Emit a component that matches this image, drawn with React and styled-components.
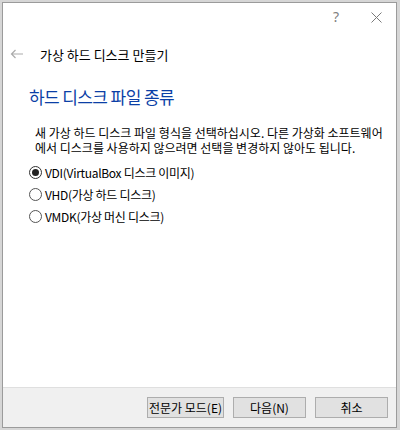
import React, { useState } from 'react';
import styled, { createGlobalStyle } from 'styled-components';

const Global = createGlobalStyle`
  html, body { margin: 0; padding: 0; }
  body {
    font-family: "Noto Sans CJK KR", "Noto Sans", sans-serif;
    font-size: 12px;
    color: #000;
  }
  * { box-sizing: border-box; }
`;

const Desktop = styled.div`
  width: 400px;
  height: 430px;
  background: #d6d6d6;
  padding: 2px 3px 2px 2px;
`;

const Window = styled.div`
  height: 100%;
  display: flex;
  flex-direction: column;
  background: #fff;
  border: 1px solid #9b9b9b;
`;

const TitleBar = styled.div`
  height: 28px;
  display: flex;
  align-items: center;
  justify-content: flex-end;
  padding-right: 14px;
  gap: 32px;
`;

const HelpBtn = styled.span`
  font-family: "Noto Sans", sans-serif;
  font-size: 14px;
  color: #808080;
  line-height: 1;
`;

const Header = styled.div`
  display: flex;
  align-items: center;
  height: 20px;
  margin-top: 13px;
  padding-left: 7px;
  gap: 17px;
`;

const Title = styled.span`
  font-size: 13px;
`;

const Body = styled.div`
  padding-left: 26px;
`;

const Heading = styled.h1`
  margin: 22px 0 0;
  font-size: 17px;
  font-weight: normal;
  line-height: 22px;
  letter-spacing: -0.6px;
  color: #0b3fa6;
`;

const Text = styled.p`
  margin: 17px 0 0 6px;
  line-height: 15px;
`;

const Options = styled.div`
  margin-top: 6px;
  display: flex;
  flex-direction: column;
`;

const Option = styled.label`
  height: 22px;
  display: flex;
  align-items: center;
  gap: 3px;
  letter-spacing: -0.3px;
`;

const Circle = styled.span`
  width: 13px;
  height: 13px;
  border-radius: 50%;
  border: 1px solid ${p => (p.$on ? '#333' : '#555')};
  background: #fff;
  display: flex;
  align-items: center;
  justify-content: center;
  &::after {
    content: '';
    width: 7px;
    height: 7px;
    border-radius: 50%;
    background: ${p => (p.$on ? '#222' : 'transparent')};
  }
`;

const Footer = styled.div`
  margin-top: auto;
  height: 40px;
  background: #f0f0f0;
  border-top: 1px solid #dfdfdf;
  display: flex;
  justify-content: flex-end;
  align-items: flex-start;
  padding: 9px 8px 0 0;
  gap: 9px;
`;

const Button = styled.button`
  width: ${p => p.$w || 73}px;
  height: 21px;
  padding: 0;
  border: 1px solid #adadad;
  background: #e1e1e1;
  font-family: inherit;
  font-size: 12px;
  color: #000;
`;

const opts = ['VDI(VirtualBox 디스크 이미지)', 'VHD(가상 하드 디스크)', 'VMDK(가상 머신 디스크)'];

export default function App() {
  const [sel, setSel] = useState(0);
  return (
    <Desktop>
      <Global />
      <Window>
        <TitleBar>
          <HelpBtn>?</HelpBtn>
          <svg width="11" height="11" viewBox="0 0 11 11">
            <path d="M0.5 0.5L10.5 10.5M10.5 0.5L0.5 10.5" stroke="#7a7a7a" strokeWidth="1" />
          </svg>
        </TitleBar>
        <Header>
          <svg width="13" height="10" viewBox="0 0 13 10">
            <path d="M13 5H1.5M5.5 1L1.5 5L5.5 9" stroke="#ababab" strokeWidth="1.2" fill="none" />
          </svg>
          <Title>가상 하드 디스크 만들기</Title>
        </Header>
        <Body>
          <Heading>하드 디스크 파일 종류</Heading>
          <Text>
            새 가상 하드 디스크 파일 형식을 선택하십시오. 다른 가상화 소프트웨어
            <br />
            에서 디스크를 사용하지 않으려면 선택을 변경하지 않아도 됩니다.
          </Text>
          <Options>
            {opts.map((o, i) => (
              <Option key={o} onClick={() => setSel(i)}>
                <Circle $on={sel === i} />
                {o}
              </Option>
            ))}
          </Options>
        </Body>
        <Footer>
          <Button $w={77}>전문가 모드(E)</Button>
          <Button>다음(N)</Button>
          <Button>취소</Button>
        </Footer>
      </Window>
    </Desktop>
  );
}
